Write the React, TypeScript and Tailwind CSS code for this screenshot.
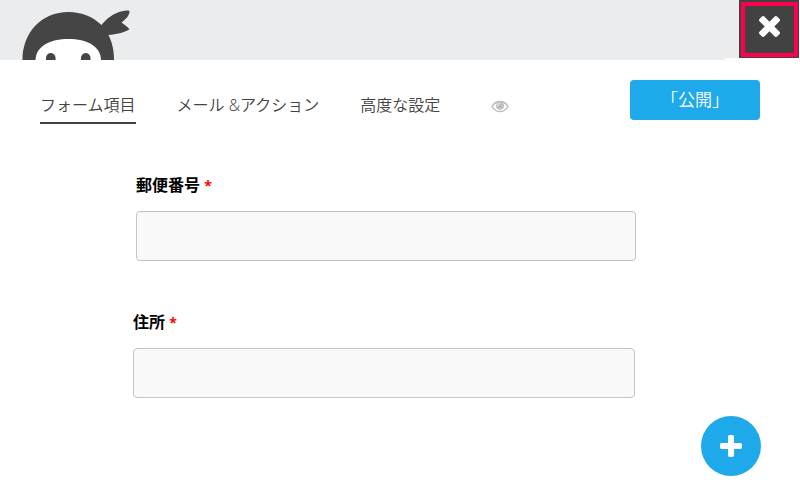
import React, { useState } from 'react';
import { clsx } from 'clsx';

const tabs = ['フォーム項目', 'メール &アクション', '高度な設定'];

function NinjaLogo() {
  return (
    <svg viewBox="0 0 112 50" className="w-28 shrink-0" aria-hidden="true">
      <path
        d="M.5 50C.5 22 20 2 46.500 2C60 2 71 7 79.500 15C85 8 92 3 100 1.200C103 .5 106 .4 107.500 1C107.500 5.500 104 9 99.500 12.500C102 14.500 105 16.500 107.500 19.200C102 23 94 24 86.500 25C90 32 92 40 92 50Z"
        fill="#444544"
      />
      <path d="M13.500 50C14 36 28 29 46.500 29C65 29 78.500 36 79 50Z" fill="#fff" />
      <path d="M24 50C23.500 46 25.500 43 28.800 43C32 43 34 46 33.500 50Z" fill="#444544" />
      <path d="M59 50C58.500 46 60.500 43 63.800 43C67 43 69 46 68.500 50Z" fill="#444544" />
    </svg>
  );
}

function CloseIcon() {
  return (
    <svg viewBox="302 366 1188 1188" className="w-[21px] h-[21px]" fill="currentColor" aria-hidden="true">
      <path d="M1490 1322q0 40-28 68l-136 136q-28 28-68 28t-68-28l-294-294-294 294q-28 28-68 28t-68-28l-136-136q-28-28-28-68t28-68l294-294-294-294q-28-28-28-68t28-68l136-136q28-28 68-28t68 28l294 294 294-294q28-28 68-28t68 28l136 136q28 28 28 68t-28 68l-294 294 294 294q28 28 28 68z" />
    </svg>
  );
}

function EyeIcon() {
  return (
    <svg viewBox="0 0 18 18" className="w-[18px] h-[18px]" fill="none" aria-hidden="true">
      <path
        d="M.9 9.500C2.800 6.200 5.700 4.400 9 4.400S15.200 6.200 17.100 9.500C15.200 12.800 12.300 14.600 9 14.600S2.800 12.800.9 9.500Z"
        stroke="currentColor"
        strokeWidth="1.500"
        strokeLinejoin="round"
      />
      <circle cx="9" cy="8.700" r="4" fill="currentColor" />
      <path d="M6.700 8.400C6.700 7.100 7.600 6.200 8.900 6.200" stroke="#fff" strokeWidth="1" strokeLinecap="round" />
    </svg>
  );
}

function PlusIcon() {
  return (
    <svg viewBox="192 128 1408 1408" className="w-[22px] h-[22px]" fill="currentColor" aria-hidden="true">
      <path d="M1600 736v192q0 40-28 68t-68 28h-416v416q0 40-28 68t-68 28h-192q-40 0-68-28t-28-68v-416h-416q-40 0-68-28t-28-68v-192q0-40 28-68t68-28h416v-416q0-40 28-68t68-28h192q40 0 68 28t28 68v416h416q40 0 68 28t28 68z" />
    </svg>
  );
}

interface FieldProps {
  id: string;
  label: string;
  className: string;
}

function Field({ id, label, className }: FieldProps) {
  return (
    <div className={clsx('flex flex-col gap-3.5', className)}>
      <label htmlFor={id} className="text-base leading-6 font-bold text-black">
        {label} <span className="text-sm text-[#ff0000]">*</span>
      </label>
      <input
        id={id}
        type="text"
        required
        className="h-[50px] w-full rounded border border-[#c4c4c4] bg-[#f9f9f9] px-3 text-base outline-none focus:border-[#1ea9ea]"
      />
    </div>
  );
}

export default function App() {
  const [activeTab, setActiveTab] = useState(tabs[0]);

  return (
    <div className="min-h-screen flex flex-col bg-white text-[#424242] font-['Open_Sans','Noto_Sans_CJK_JP',sans-serif]">
      {/* Header */}
      <header className="flex items-start pr-px">
        <div className="flex-1 h-[60px] flex items-end pl-[22px] bg-[#ebecee]">
          <NinjaLogo />
        </div>
        <div className="w-[14px] h-[58px] bg-[#ebecee]" />
        <button
          type="button"
          aria-label="閉じる"
          className="w-[60px] h-[58px] pl-0.5 pt-0.5 pr-px pb-px bg-[#424242] text-white"
        >
          <span className="w-full h-full flex justify-center pt-[10px] border-4 border-[#ff004f]">
            <CloseIcon />
          </span>
        </button>
      </header>

      {/* Tabs */}
      <nav className="flex items-start justify-between px-10 pt-5">
        <div className="flex items-center gap-[41px] pt-2">
          {tabs.map((tab) => (
            <button
              key={tab}
              type="button"
              onClick={() => setActiveTab(tab)}
              className={clsx(
                'h-9 pb-px border-b-2 text-base leading-6 font-[350] whitespace-nowrap',
                tab === activeTab ? 'border-[#424242]' : 'border-transparent'
              )}
            >
              {tab}
            </button>
          ))}
          <button type="button" aria-label="プレビュー" className="h-9 px-2.5 text-[#bdbdbd]">
            <EyeIcon />
          </button>
        </div>
        <button type="button" className="w-[130px] h-10 rounded bg-[#1ea9ea] text-[17px] font-[350] text-white">
          「公開」
        </button>
      </nav>

      {/* Fields */}
      <main className="flex-1 flex flex-col gap-[49px] pt-[49px]">
        <Field id="zip" label="郵便番号" className="ml-[136px] mr-[164px]" />
        <Field id="address" label="住所" className="ml-[133px] mr-[165px]" />
      </main>

      <footer className="flex justify-end pr-[39px] pb-5">
        <button
          type="button"
          aria-label="項目を追加"
          className="w-[60px] h-[60px] rounded-full flex items-center justify-center bg-[#1ea9ea] text-white"
        >
          <PlusIcon />
        </button>
      </footer>
    </div>
  );
}
